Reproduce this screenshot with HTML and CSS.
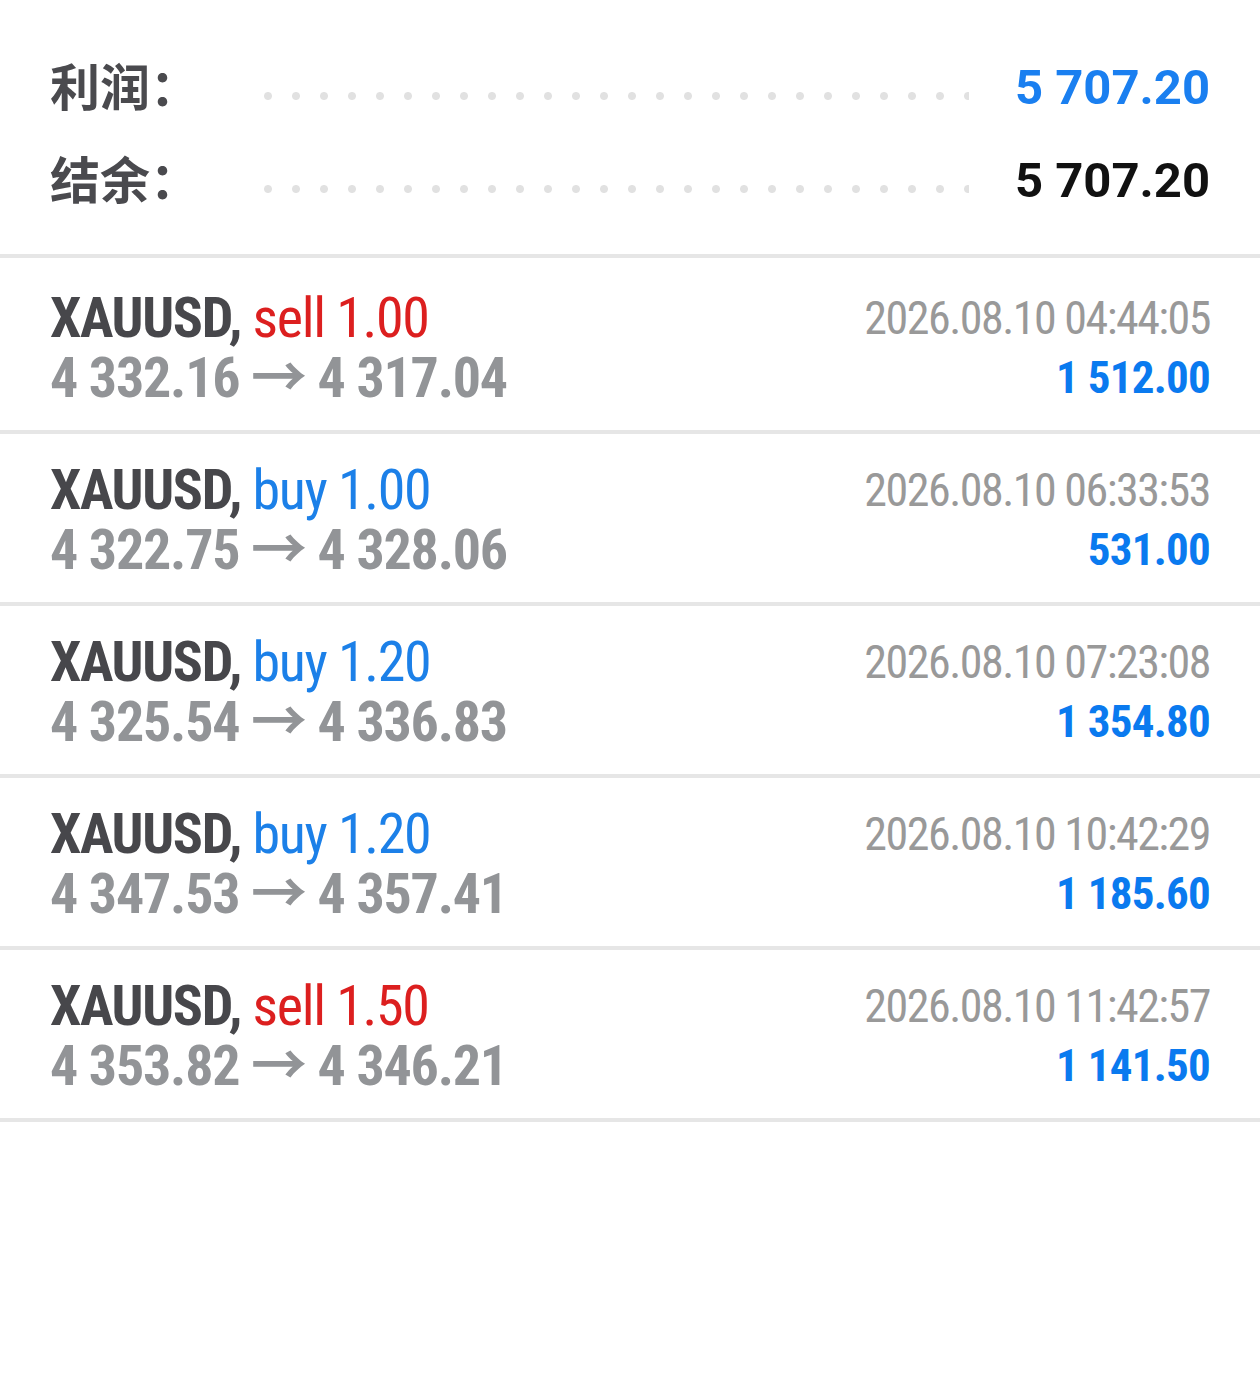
FILE: index.html
```html
<!DOCTYPE html>
<html lang="zh-CN">
<head>
    <meta charset="UTF-8">
    <meta name="viewport" content="width=device-width, initial-scale=1.0">
    <title>交易历史</title>
    <link rel="stylesheet" href="styles.css">
</head>
<body>
    <div class="summary">
        <div class="summary-row">
            <span class="summary-label">利润：</span>
            <span class="dots"></span>
            <span class="summary-value blue">5 707.20</span>
        </div>
        <div class="summary-row">
            <span class="summary-label">结余：</span>
            <span class="dots"></span>
            <span class="summary-value">5 707.20</span>
        </div>
    </div>
    <div class="deals">
        <div class="deal">
            <div class="deal-left">
                <div class="deal-title">XAUUSD, <span class="sell">sell 1.00</span></div>
                <div class="deal-prices">4 332.16 → 4 317.04</div>
            </div>
            <div class="deal-right">
                <div class="deal-time">2026.08.10 04:44:05</div>
                <div class="deal-profit">1 512.00</div>
            </div>
        </div>
        <div class="deal">
            <div class="deal-left">
                <div class="deal-title">XAUUSD, <span class="buy">buy 1.00</span></div>
                <div class="deal-prices">4 322.75 → 4 328.06</div>
            </div>
            <div class="deal-right">
                <div class="deal-time">2026.08.10 06:33:53</div>
                <div class="deal-profit">531.00</div>
            </div>
        </div>
        <div class="deal">
            <div class="deal-left">
                <div class="deal-title">XAUUSD, <span class="buy">buy 1.20</span></div>
                <div class="deal-prices">4 325.54 → 4 336.83</div>
            </div>
            <div class="deal-right">
                <div class="deal-time">2026.08.10 07:23:08</div>
                <div class="deal-profit">1 354.80</div>
            </div>
        </div>
        <div class="deal">
            <div class="deal-left">
                <div class="deal-title">XAUUSD, <span class="buy">buy 1.20</span></div>
                <div class="deal-prices">4 347.53 → 4 357.41</div>
            </div>
            <div class="deal-right">
                <div class="deal-time">2026.08.10 10:42:29</div>
                <div class="deal-profit">1 185.60</div>
            </div>
        </div>
        <div class="deal">
            <div class="deal-left">
                <div class="deal-title">XAUUSD, <span class="sell">sell 1.50</span></div>
                <div class="deal-prices">4 353.82 → 4 346.21</div>
            </div>
            <div class="deal-right">
                <div class="deal-time">2026.08.10 11:42:57</div>
                <div class="deal-profit">1 141.50</div>
            </div>
        </div>
    </div>
</body>
</html>
```

FILE: styles.css
```css
body {
    margin: 0;
    padding: 0;
    background: #ffffff;
    font-family: "Roboto Condensed", Roboto, "Noto Sans CJK SC", sans-serif;
}
.summary {
    padding: 41px 50px 27px 50px;
    border-bottom: 4px solid #e6e6e6;
}
.summary-row {
    display: flex;
    align-items: center;
    height: 93px;
}
.summary-label {
    width: 214px;
    padding-bottom: 8px;
    font-family: "Noto Sans CJK SC", sans-serif;
    font-size: 50px;
    font-weight: bold;
    color: #4a4a4e;
    white-space: nowrap;
}
.dots {
    flex: 1;
    height: 10px;
    margin: 16px 46px 0 0;
    background-image: radial-gradient(circle at 4px 50%, #e1e1e1 3.5px, rgba(225, 225, 225, 0) 4.5px);
    background-size: 28px 10px;
    background-repeat: repeat-x;
}
.summary-value {
    font-family: Roboto, sans-serif;
    font-size: 49px;
    font-weight: bold;
    color: #111111;
}
.blue {
    color: #1a7ff0;
}
.deals {
    padding-top: 4px;
}
.deal {
    display: flex;
    justify-content: space-between;
    padding: 26px 50px 22px 50px;
    border-bottom: 4px solid #e6e6e6;
    font-stretch: condensed;
}
.deal-left, .deal-right {
    line-height: 60px;
}
.deal-right {
    text-align: right;
}
.deal-title {
    font-size: 56px;
    font-weight: bold;
    color: #47474b;
    letter-spacing: -1.35px;
}
.deal-title span {
    font-weight: normal;
}
.sell {
    color: #dc1f1f;
}
.buy {
    color: #1c80e8;
}
.deal-prices {
    font-size: 56px;
    font-weight: bold;
    color: #929497;
    letter-spacing: -1.2px;
}
.deal-time {
    font-size: 46px;
    color: #999999;
    letter-spacing: -1.5px;
}
.deal-profit {
    font-size: 45px;
    font-weight: bold;
    color: #0a7aef;
    letter-spacing: -0.75px;
}
```
